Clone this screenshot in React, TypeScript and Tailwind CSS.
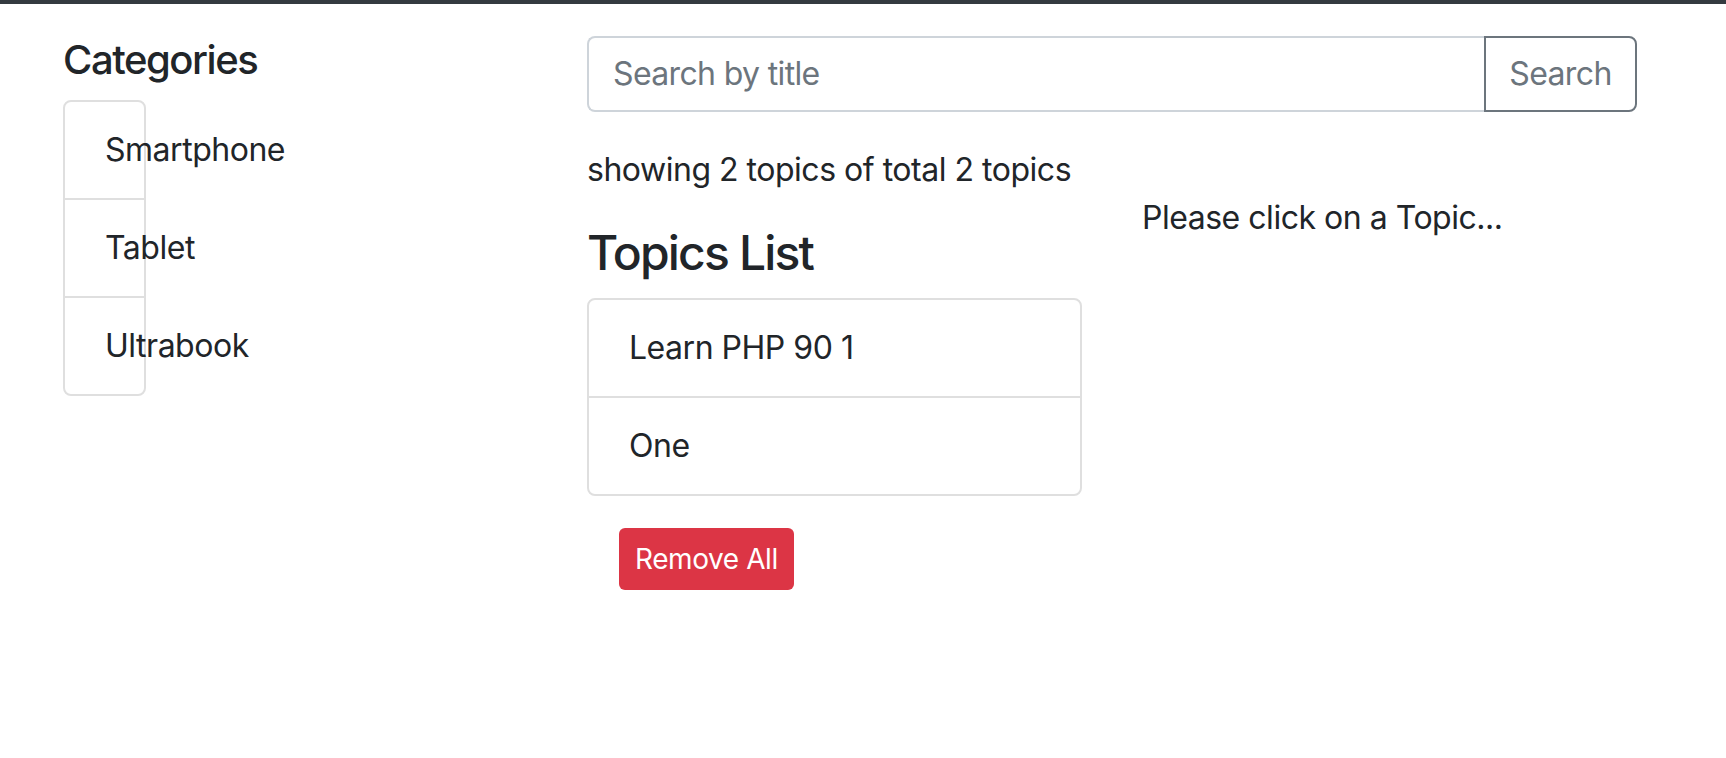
import React from "react";

export default function App() {
  const cats = ["Smartphone", "Tablet", "Ultrabook"];
  const topics = ["Learn PHP 90 1", "One"];
  return (
    <div className="min-h-[758px] bg-white font-['Inter',sans-serif] text-[#212529] tracking-[-0.03em]">
      <div className="h-[4px] bg-[#343a40]" />
      <div className="flex pt-[32px]">
        <div className="ml-[63px] w-[524px] shrink-0">
          <h5 className="mb-[16px] text-[40px] font-medium leading-[48px] tracking-[-0.036em]">Categories</h5>
          <ul className="w-[83px] rounded-[8px] border-2 border-[#dfdfdf]">
            {cats.map((c, i) => (
              <li
                key={c}
                className={
                  "whitespace-nowrap px-[40px] py-[24px] text-[32px] leading-[48px] " +
                  (i < cats.length - 1 ? "border-b-2 border-[#dfdfdf]" : "")
                }
              >
                {c}
              </li>
            ))}
          </ul>
        </div>
        <div className="w-[1050px] shrink-0">
          <div className="mb-[34px] flex h-[76px]">
            <input
              className="min-w-0 flex-1 rounded-l-[8px] border-2 border-r-0 border-[#ced4da] px-[24px] text-[32px] leading-[48px] tracking-[-0.02em] outline-none placeholder:text-[#6c757d]"
              placeholder="Search by title"
            />
            <button className="w-[153px] rounded-r-[8px] border-2 border-[#6c757d] text-[32px] leading-[48px] tracking-[-0.02em] text-[#6c757d]">
              Search
            </button>
          </div>
          <div className="flex gap-[60px]">
            <div className="w-[495px] shrink-0">
              <p className="mb-[30px] whitespace-nowrap text-[32px] leading-[48px]">showing 2 topics of total 2 topics</p>
              <h4 className="mb-[16px] text-[48px] font-medium leading-[58px] tracking-[-0.038em]">Topics List</h4>
              <ul className="rounded-[8px] border-2 border-[#dfdfdf]">
                {topics.map((t, i) => (
                  <li
                    key={t}
                    className={
                      "px-[40px] py-[24px] text-[32px] leading-[48px] " +
                      (i < topics.length - 1 ? "border-b-2 border-[#dfdfdf]" : "")
                    }
                  >
                    {t}
                  </li>
                ))}
              </ul>
              <button className="m-[32px] h-[62px] rounded-[6px] bg-[#dc3545] px-[16px] text-[28px] leading-[42px] tracking-[-0.015em] text-white">
                Remove All
              </button>
            </div>
            <div className="w-[495px] shrink-0">
              <div className="h-[48px]" />
              <p className="text-[32px] leading-[48px]">Please click on a Topic...</p>
            </div>
          </div>
        </div>
      </div>
    </div>
  );
}
